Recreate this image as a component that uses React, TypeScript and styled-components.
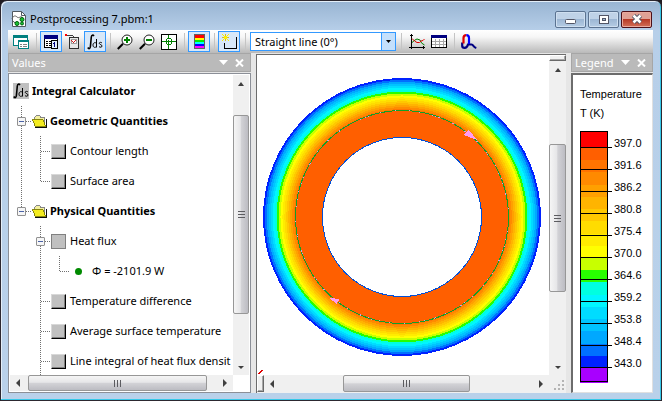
import React from 'react';
import styled, { createGlobalStyle, css } from 'styled-components';

const Global = createGlobalStyle`
  * { box-sizing: border-box; }
  html, body { margin: 0; background: #201c22; }
  button, select { font: inherit; color: inherit; }
  button { padding: 0; margin: 0; border: 0; background: none; }
  svg { display: block; flex: none; }
  ul { list-style: none; margin: 0; padding: 0; }
`;

const Frame = styled.div`
  display: flex;
  flex-direction: column;
  height: 100vh;
  padding: 0 8px 7px 7px;
  border: 1px solid #2c2830;
  border-radius: 7px 7px 0 0;
  background: linear-gradient(#98b4d2, #b7cfe9 30px, #b9d1ea);
  box-shadow: inset -1px -1px #36c8e8, inset 1px 1px #e4eef8;
  font: 11px/16px 'Noto Sans', 'Open Sans', sans-serif;
  color: #000;
`;

const TitleBar = styled.header`
  display: flex;
  align-items: center;
  height: 29px;
  flex: none;
  padding-left: 3px;
  padding-top: 7px;
  gap: 3px;
`;

const Title = styled.h1`
  margin: 0;
  flex: 1;
  font-size: 11px;
  font-weight: 400;
  line-height: 16px;
`;

const WindowButtons = styled.div`
  display: flex;
  gap: 2px;
  padding-right: 1px;
`;

const WindowButton = styled.button<{ $close?: boolean }>`
  display: grid;
  place-items: center;
  width: 31px;
  height: 17px;
  border: 1px solid ${p => (p.$close ? '#4c1018' : '#5b7391')};
  border-radius: 2px;
  box-shadow: inset 0 0 0 1px ${p => (p.$close ? '#e9a99d' : '#cfdff0')};
  background: ${p => (p.$close
    ? 'linear-gradient(#e0a195 0 45%, #b83a26 50%, #d27058)'
    : 'linear-gradient(#bfd2e7 0 45%, #9db7d4 50%, #b5cce4)')};
`;

const Toolbar = styled.div`
  display: flex;
  align-items: center;
  flex: none;
  height: 23px;
  padding-left: 2px;
  background: linear-gradient(#fff, #f6f6f6 30%, #b9b9b9);
`;

const ToolButton = styled.button<{ $on?: boolean }>`
  display: grid;
  place-items: center;
  width: 22px;
  height: 21px;
  flex: none;
  ${p => p.$on && css`border: 1px solid #3399ff; background: #d8e8f8;`}
`;

const Separator = styled.span<{ $wide?: boolean }>`
  width: ${p => (p.$wide ? 10 : 8)}px;
  height: 17px;
  flex: none;
  background: linear-gradient(#c4c4c4, #c4c4c4) center / 1px 100% no-repeat;
`;

const Combo = styled.div`
  display: grid;
  grid-template-columns: 1fr 14px;
  width: 146px;
  height: 19px;
  border: 1px solid #3399ff;
  background: #fff;
`;

const ComboSelect = styled.select`
  grid-area: 1 / 1 / 2 / 3;
  appearance: none;
  border: 0;
  padding: 0 0 0 4px;
  background: none;
  line-height: 16px;
`;

const ComboArrow = styled.span`
  grid-area: 1 / 2;
  display: grid;
  place-items: center;
  border-left: 1px solid #3399ff;
  background: #c4e0fc;
  pointer-events: none;
`;

const Workspace = styled.main`
  display: grid;
  grid-template-columns: 243px minmax(0, 1fr) 82px;
  gap: 5px;
  flex: 1;
  min-height: 0;
  background: #e6e6e6;
`;

const Panel = styled.section`
  display: flex;
  flex-direction: column;
  min-width: 0;
  min-height: 0;
`;

const PanelHeader = styled.div`
  display: flex;
  align-items: center;
  flex: none;
  height: 19px;
  padding: 0 3px;
  border: 1px solid #a6a6a6;
  background: #bababa;
  color: #fff;
  gap: 1px;
`;

const PanelTitle = styled.h2`
  margin: 0;
  flex: 1;
  font-size: 11px;
  line-height: 16px;
  font-weight: 400;
`;

const HeaderButton = styled.button`
  display: grid;
  place-items: center;
  width: 15px;
  height: 15px;
`;

const ScrollPane = styled.div`
  display: grid;
  grid-template-columns: minmax(0, 1fr) 16px;
  grid-template-rows: minmax(0, 1fr) 16px;
  flex: 1;
  min-height: 0;
  margin-top: 1px;
  border: 1px solid #8b8f97;
  padding: 1px;
  background: #fff;
`;

const ViewPane = styled(ScrollPane)`
  border-width: 1px 0 0 1px;
  border-color: #6c6c6c;
  padding: 0 0 1px;
  background: #f0f0f0;
  grid-template-columns: minmax(0, 1fr) 17px;
  grid-template-rows: minmax(0, 1fr) 17px;
`;

const Stage = styled.svg`
  width: 100%;
  height: 100%;
  background: #fff;
`;

const LegendBox = styled.div`
  flex: 1;
  margin-top: 1px;
  border: solid #6c6c6c;
  border-width: 2px 1px 1px 2px;
  border-right-color: #e0e0e0;
  border-bottom-color: #e0e0e0;
  padding: 10px 0 0 7px;
  background: #fff;
  font: 11px/19px 'Liberation Sans', Arial, sans-serif;
`;

const LegendText = styled.div`
  height: 19px;
  white-space: nowrap;
`;

const ScaleArea = styled.div`
  padding-top: 8px;
`;

const Tree = styled.ul`
  overflow: hidden;
  padding-top: 1px;
`;

const TreeRow = styled.li<{ $bold?: boolean }>`
  display: flex;
  align-items: center;
  height: 30px;
  padding-left: 2px;
  white-space: nowrap;
  font-weight: ${p => (p.$bold ? 700 : 400)};
`;

const GuideCell = styled.span`
  display: grid;
  flex: none;
  width: 19px;
  height: 30px;
  > * { grid-area: 1 / 1; }
`;

const Expander = styled.button`
  place-self: center;
  width: 9px;
  height: 9px;
  border: 1px solid #919191;
  border-radius: 1px;
  background: linear-gradient(#4b63a7, #4b63a7) center / 5px 1px no-repeat, #f6f6f6;
`;

const Item = styled.button<{ $tight?: boolean }>`
  display: flex;
  align-items: center;
  gap: ${p => (p.$tight ? 3 : 4)}px;
  padding-left: 1px;
  font-weight: inherit;
`;

const Swatch = styled.span<{ $flat?: boolean }>`
  width: 15px;
  height: 15px;
  flex: none;
  background: #c0c0c0;
  border: 1px solid #808080;
  ${p => !p.$flat && css`
    border-color: #d8d8d8 #000 #000 #d8d8d8;
    box-shadow: inset -1px -1px #808080;
  `}
`;

const Dot = styled.span`
  width: 7px;
  height: 7px;
  margin: 0 6px 0 5px;
  border-radius: 50%;
  background: #008a00;
`;

const Bar = styled.div<{ $vertical?: boolean }>`
  display: flex;
  flex-direction: ${p => (p.$vertical ? 'column' : 'row')};
  flex: 1;
  min-width: 0;
  min-height: 0;
  background: #f0f0f0;
`;

const BarSlot = styled.div<{ $vertical?: boolean }>`
  display: flex;
  flex-direction: ${p => (p.$vertical ? 'column' : 'row')};
  min-width: 0;
  min-height: 0;
`;

const ArrowButton = styled.button`
  display: grid;
  place-items: center;
  flex: 0 0 17px;
`;

const Space = styled.span<{ $grow: number }>`
  flex: ${p => p.$grow} 1 0;
`;

const Thumb = styled.button<{ $grow: number; $vertical?: boolean }>`
  display: grid;
  place-items: center;
  flex: ${p => p.$grow} 1 0;
  border: 1px solid #979797;
  border-radius: 2px;
  background: linear-gradient(${p => (p.$vertical ? '90deg' : '180deg')}, #f5f5f5, #e6e6e8 45%, #d2d2d6 52%, #bcbcc2);
`;

const SplitHandle = styled.span<{ $vertical?: boolean }>`
  flex: 0 0 ${p => (p.$vertical ? 6 : 7)}px;
  border: 1px solid #fff;
  border-right-color: #696969;
  border-bottom-color: #696969;
  box-shadow: inset -1px -1px #a8a8a8;
  background: #f0f0f0;
`;

const SizeGrip = styled.div`
  display: grid;
  place-items: end;
  padding: 2px;
`;

type ScrollProps = { vertical?: boolean; before: number; thumb: number; after: number; name: string };

function ScrollBar({ vertical, before, thumb, after, name }: ScrollProps) {
  const first = vertical ? 'M3 6 6 2 9 6z' : 'M7 2 3 6 7 10z';
  const last = vertical ? 'M3 3h6L6 6z' : 'M4 2 8 6 4 10z';
  return (
    <Bar $vertical={vertical}>
      <ArrowButton aria-label={`${name} back`}>
        <svg width="12" height={vertical ? 8 : 12}><path d={first} fill="#404040" /></svg>
      </ArrowButton>
      <Space $grow={before} />
      <Thumb $grow={thumb} $vertical={vertical} aria-label={`${name} thumb`}>
        <svg width="9" height="9" stroke="#5c5c60" shapeRendering="crispEdges">
          <path d={vertical ? 'M1 1.5h7M1 4.5h7M1 7.5h7' : 'M1.5 1v7M4.5 1v7M7.5 1v7'} />
        </svg>
      </Thumb>
      <Space $grow={after} />
      <ArrowButton aria-label={`${name} forward`}>
        <svg width="12" height={vertical ? 8 : 12}><path d={last} fill="#404040" /></svg>
      </ArrowButton>
    </Bar>
  );
}

/* Toolbar drawings, 16 by 16 */
const icon = { width: 16, height: 16, viewBox: '0 0 16 16', fill: 'none', shapeRendering: 'crispEdges' as const };

const WindowsIcon = () => (
  <svg {...icon}>
    <path fill="#fff" stroke="#008080" d="M.5 1.5h14v10H.5z" /><path fill="#008080" d="M0 1h15v3H0z" />
    <path fill="#fff" stroke="#008080" d="M5.5 6.5h10v8h-10z" /><path stroke="#008080" d="M5 7.5h11" />
    <path stroke="#808080" d="M7 10.5h2M10 10.5h4M10 12.5h4M7 12.5h2" />
  </svg>
);
const SheetIcon = () => (
  <svg {...icon}>
    <path fill="#fff" stroke="#000" d="M1.5 2.5h13v11h-13z" /><path fill="#000080" d="M1 1h14v4H1z" />
    <path stroke="#000" d="M3 7.5h2M6 7.5h2M3 9.5h2M6 9.5h2M3 11.5h2M6 11.5h2" />
    <path fill="#e0f0ff" stroke="#000" d="M8.5 6.5h6v8h-6z" /><path stroke="#000080" d="M11.5 8v5M10 9.5h2" />
  </svg>
);
const ProbeIcon = () => (
  <svg {...icon}>
    <path fill="#f00" d="M0 0h2v2H0z" />
    <path stroke="#404040" d="M2 1.500h6M8.500 2v2" />
    <path fill="#e8e8e8" stroke="#303030" d="M4.500 3.500h9v11h-9z" />
    <path fill="#fff" stroke="#a0a0a0" d="M6.500 5.500h5v4h-5z" />
    <path fill="#d02020" d="M6 6h1v1H6zM7 7h1v1H7zM8 8h1v1H8zM9 7h1v1H9zM10 6h1v1h-1z" />
  </svg>
);
const IntegralIcon = ({ gray }: { gray?: boolean }) => (
  <svg width="16" height="16" viewBox="0 0 16 16" fill="none">
    {gray && <path fill="#c0c0c0" d="M0 0h16v16H0z" />}
    <path stroke="#000" strokeWidth="1.6" d="M.8 13.500c1 1.800 2.400 1.200 2.600-1L4.300 3C4.600.8 6 .6 7 2" />
    <path stroke="#000" d="M9.500 5v8.500M9.500 9.500C8.500 8 6 8.500 6 11s2 3 3.500 1.500M15 9c-1-1-3-.8-2.700.5.3 1.200 2.700 1 2.700 2.500s-2 1.500-3 .6" />
  </svg>
);
const LensIcon = ({ plus }: { plus?: boolean }) => (
  <svg width="16" height="16" viewBox="0 0 16 16" fill="none">
    <path stroke="#000" strokeWidth="2" d="M.8 15 6 9.800" />
    <circle cx="10" cy="6" r="5" fill="#fff" stroke="#202020" />
    <path stroke="#008000" strokeWidth="2" d={plus ? 'M7 6h6M10 3v6' : 'M7 6h6'} />
  </svg>
);
const FitIcon = () => (
  <svg {...icon}>
    <path fill="#fff" stroke="#000" d="M.5.5h15v15H.5z" />
    <path stroke="#008000" d="M1 7.500h4M6 7.500h4M11 7.500h4M7.500 1v4M7.500 6v4M7.500 11v4M5.500 5v5M10.500 5v5M6 4.500h4M6 10.500h4" />
  </svg>
);
const BandsIcon = () => (
  <svg {...icon}>
    <path fill="#606060" d="M3 0h11v15H3z" />
    <path fill="#ff0000" d="M4 1h9v3H4z" /><path fill="#ffff00" d="M4 4h9v2H4z" />
    <path fill="#00f000" d="M4 6h9v2H4z" /><path fill="#00ffff" d="M4 8h9v2H4z" />
    <path fill="#0000ff" d="M4 10h9v2H4z" /><path fill="#ff00ff" d="M4 12h9v2H4z" />
  </svg>
);
const NewContourIcon = () => (
  <svg {...icon}>
    <path stroke="#000" d="M3.500 9v5.500h12V3" />
    <path stroke="#d8c020" d="M4.500 0v7M1 3.500h7" />
    <path fill="#fff000" d="M1 0h1v1H1zM2 1h1v1H2zM7 0h1v1H7zM6 1h1v1H6zM3 2h3v3H3zM2 5h1v1H2zM1 6h1v1H1zM6 5h1v1H6zM7 6h1v1H7z" />
  </svg>
);
const PlotIcon = () => (
  <svg {...icon} shapeRendering="auto">
    <path stroke="#000" shapeRendering="crispEdges" d="M2.500 0v15M0 13.500h16M1 1.500h3M14.500 12v3" />
    <path stroke="#008000" d="M3 8.500 6 6l2-1 3 1 1.500 3 3 2" />
    <path stroke="#e00000" d="M3 4.500 5.500 7 8 8.500h2.500L12 7l2-.5L15.500 5" />
  </svg>
);
const TableIcon = () => (
  <svg {...icon}>
    <path fill="#fff" stroke="#000" d="M.5 1.500h15v12H.5z" /><path fill="#000080" d="M0 1h16v3H0z" />
    <path stroke="#a8a8a8" d="M1 7.500h14M1 10.500h14M4.500 5v8M8.500 5v8M12.500 5v8" />
  </svg>
);
const LoopIcon = () => (
  <svg width="16" height="16" viewBox="0 0 16 16" fill="none" strokeWidth="2.200">
    <path stroke="#000080" d="M1.200 8.500V12q0 1.800 2.500 1.800T7 10.500h3.500q1 0 2 1.500t2.800 2" />
    <path stroke="#e00000" d="M2.500 9.500V4q0-2.800 2.800-2.800" />
    <path stroke="#0000ff" d="M5.300 1.200Q8 1.200 8 4v6" />
  </svg>
);
const FolderIcon = () => (
  <svg width="15" height="15" viewBox="0 0 16 15" shapeRendering="crispEdges">
    <path fill="#f4f0a0" stroke="#808080" d="M2.500 12V3.500l2-2h4l1 2h4V12z" />
    <path fill="#f4ec20" stroke="#808000" d="M.5 5.500h11l3 7h-11z" />
    <path fill="none" stroke="#000" d="M3 13.500h12.500V5" />
  </svg>
);
const DocumentIcon = () => (
  <svg width="16" height="16" viewBox="0 0 16 16" fill="none">
    <path fill="#fff" stroke="#505860" d="M1.500.5h9l4 4v11h-13z" />
    <path stroke="#505860" d="M10.500.5v4h4" />
    <path stroke="#606060" d="M1 8c1-3 3-4 5-2s4-2 6 1M2 10c1 2 3 2 4 1" />
    <circle cx="11" cy="8.500" r="2" fill="#18c030" stroke="#006010" />
    <circle cx="6" cy="12.500" r="2" fill="#18c030" stroke="#006010" />
    <circle cx="11" cy="12.500" r="1.500" fill="#18c030" stroke="#006010" />
  </svg>
);

/* Colour scale from hot to cold, shared by the field picture and the legend */
const SCALE = ['#ff5f00', '#ff7400', '#ff8a00', '#ffa000', '#ffb400', '#ffc800', '#ffdc00', '#ffec00', '#ffff00',
  '#c8ff00', '#28ff00', '#00ffe0', '#00f6ff', '#00dcff', '#00c4ff', '#00a8ff', '#0070ff', '#0022ff'];
const TICKS = ['397.0', '391.6', '386.2', '380.8', '375.4', '370.0', '364.6', '359.2', '353.8', '348.4', '343.0'];

function FieldPicture() {
  const step = 33 / 17;
  return (
    <Stage viewBox="0 0 291 320" role="img" aria-label="Temperature field" shapeRendering="crispEdges">
      {SCALE.slice().reverse().map((c, i) => (
        <circle key={c} cx="144.500" cy="162" r={139 - i * step} fill={c} />
      ))}
      <circle cx="144.500" cy="162" r="106.500" fill="#ff5f00" stroke="#c8a0f0" />
      <circle cx="144.500" cy="162" r="106.500" fill="none" stroke="#10a028" strokeDasharray="14 1" />
      <circle cx="144.500" cy="162" r="79.500" fill="#fff" stroke="#0050d8" />
      <path fill="#ff9cf0" d="M206 80l5-5 9 10zM72 243l10 1-3 5z" />
      <path stroke="#e00000" d="M1 319l4-4" />
    </Stage>
  );
}

function Scale() {
  const h = 220 / 18;
  return (
    <svg width="70" height="253" viewBox="0 0 70 253" fontSize="11" fontFamily="'Liberation Sans', Arial, sans-serif">
      <g shapeRendering="crispEdges">
        <path fill="#ff0000" d="M0 0h28v17H0z" />
        {SCALE.map((c, i) => <rect key={c} x="0" y={17 + i * h} width="28" height={h} fill={c} />)}
        <path fill="#a800ff" d="M0 237h28v15H0z" />
        {TICKS.map((t, i) => <path key={t} stroke="#000" d={`M0 ${16.5 + i * 22}h32`} />)}
        <path fill="none" stroke="#000" d="M.5.5h27v250H.5z" />
      </g>
      {TICKS.map((t, i) => <text key={t} x="34" y={16 + i * 22}>{t}</text>)}
    </svg>
  );
}

type Line = 'none' | 'pass' | 'tee' | 'end';
type Node = { text: string; kind: 'root' | 'folder' | 'item' | 'open' | 'value'; guides: Line[] };

const NODES: Node[] = [
  { text: 'Integral Calculator', kind: 'root', guides: [] },
  { text: 'Geometric Quantities', kind: 'folder', guides: ['tee'] },
  { text: 'Contour length', kind: 'item', guides: ['pass', 'tee'] },
  { text: 'Surface area', kind: 'item', guides: ['pass', 'end'] },
  { text: 'Physical Quantities', kind: 'folder', guides: ['end'] },
  { text: 'Heat flux', kind: 'open', guides: ['none', 'tee'] },
  { text: 'Φ = -2101.9 W', kind: 'value', guides: ['none', 'pass', 'end'] },
  { text: 'Temperature difference', kind: 'item', guides: ['none', 'tee'] },
  { text: 'Average surface temperature', kind: 'item', guides: ['none', 'tee'] },
  { text: 'Line integral of heat flux densit', kind: 'item', guides: ['none', 'tee'] },
];

const PATHS: Record<Line, string> = {
  none: '',
  pass: 'M9.5 0v30',
  tee: 'M9.5 0v30M10 15.500h10',
  end: 'M9.5 0v16M10 15.500h10',
};

function TreeNode({ text, kind, guides }: Node) {
  const expandable = kind === 'folder' || kind === 'open';
  const heading = kind === 'root' || kind === 'folder';
  return (
    <TreeRow $bold={heading} role="treeitem">
      {guides.map((g, i) => (
        <GuideCell key={i}>
          <svg width="19" height="30" stroke="#707070" strokeDasharray="1 1" shapeRendering="crispEdges">
            <path d={PATHS[g]} />
          </svg>
          {expandable && i === guides.length - 1 && <Expander aria-label={`Collapse ${text}`} />}
        </GuideCell>
      ))}
      <Item $tight={heading}>
        {kind === 'root' && <IntegralIcon gray />}
        {kind === 'folder' && <FolderIcon />}
        {kind === 'item' && <Swatch />}
        {kind === 'open' && <Swatch $flat />}
        {kind === 'value' && <Dot />}
        {text}
      </Item>
    </TreeRow>
  );
}

function Header({ title }: { title: string }) {
  return (
    <PanelHeader>
      <PanelTitle>{title}</PanelTitle>
      <HeaderButton aria-label={`${title} menu`}>
        <svg width="9" height="5"><path fill="#fff" d="M0 0h9L4.500 5z" /></svg>
      </HeaderButton>
      <HeaderButton aria-label={`Close ${title}`}>
        <svg width="9" height="8" stroke="#fff" strokeWidth="2"><path d="M1 .5l7 7M8 .5l-7 7" /></svg>
      </HeaderButton>
    </PanelHeader>
  );
}

export default function App() {
  return (
    <Frame>
      <Global />
      <TitleBar>
        <DocumentIcon />
        <Title>Postprocessing 7.pbm:1</Title>
        <WindowButtons>
          <WindowButton aria-label="Minimize">
            <svg width="12" height="10"><rect x=".5" y="5.500" width="10" height="4" rx="1" fill="#fff" stroke="#535666" /></svg>
          </WindowButton>
          <WindowButton aria-label="Maximize">
            <svg width="10" height="9" shapeRendering="crispEdges">
              <path fill="#fff" stroke="#535666" d="M.5.500h9v8h-9z" /><path fill="#9db7d4" stroke="#535666" d="M3.500 3.500h3v2h-3z" />
            </svg>
          </WindowButton>
          <WindowButton $close aria-label="Close">
            <svg width="12" height="10" fill="none">
              <path stroke="#535666" strokeWidth="4.500" d="M2.500 1.500l7 7M9.500 1.500l-7 7" />
              <path stroke="#fff" strokeWidth="2.500" d="M2.500 1.500l7 7M9.500 1.500l-7 7" />
            </svg>
          </WindowButton>
        </WindowButtons>
      </TitleBar>
      <Toolbar role="toolbar">
        <ToolButton aria-label="Windows"><WindowsIcon /></ToolButton>
        <Separator />
        <ToolButton $on aria-label="Values"><SheetIcon /></ToolButton>
        <ToolButton aria-label="Local values"><ProbeIcon /></ToolButton>
        <ToolButton $on aria-label="Integral values"><IntegralIcon /></ToolButton>
        <Separator />
        <ToolButton aria-label="Zoom in"><LensIcon plus /></ToolButton>
        <ToolButton aria-label="Zoom out"><LensIcon /></ToolButton>
        <ToolButton aria-label="Zoom to fit"><FitIcon /></ToolButton>
        <Separator />
        <ToolButton $on aria-label="Legend"><BandsIcon /></ToolButton>
        <Separator />
        <ToolButton $on aria-label="New contour"><NewContourIcon /></ToolButton>
        <Separator $wide />
        <Combo>
          <ComboSelect aria-label="Contour line type"><option>Straight line (0°)</option></ComboSelect>
          <ComboArrow><svg width="5" height="3"><path d="M0 0h5L2.500 3z" /></svg></ComboArrow>
        </Combo>
        <Separator $wide />
        <ToolButton aria-label="Plot"><PlotIcon /></ToolButton>
        <ToolButton aria-label="Table"><TableIcon /></ToolButton>
        <Separator />
        <ToolButton aria-label="Contour"><LoopIcon /></ToolButton>
      </Toolbar>
      <Workspace>
        <Panel>
          <Header title="Values" />
          <ScrollPane>
            <Tree role="tree">{NODES.map(n => <TreeNode key={n.text} {...n} />)}</Tree>
            <BarSlot $vertical><ScrollBar vertical name="Values vertical" before={23} thumb={197} after={44} /></BarSlot>
            <BarSlot><ScrollBar name="Values horizontal" before={1} thumb={178} after={9} /></BarSlot>
          </ScrollPane>
        </Panel>
        <Panel>
          <ViewPane>
            <FieldPicture />
            <BarSlot $vertical>
              <SplitHandle $vertical />
              <ScrollBar vertical name="View vertical" before={66} thumb={146} after={66} />
            </BarSlot>
            <BarSlot>
              <SplitHandle />
              <ScrollBar name="View horizontal" before={62} thumb={126} after={62} />
            </BarSlot>
            <SizeGrip>
              <svg width="10" height="10" fill="#b4b4b4"><path d="M8 0h2v2H8zM8 4h2v2H8zM4 4h2v2H4zM8 8h2v2H8zM4 8h2v2H4zM0 8h2v2H0z" /></svg>
            </SizeGrip>
          </ViewPane>
        </Panel>
        <Panel>
          <Header title="Legend" />
          <LegendBox>
            <LegendText>Temperature</LegendText>
            <LegendText>T (K)</LegendText>
            <ScaleArea><Scale /></ScaleArea>
          </LegendBox>
        </Panel>
      </Workspace>
    </Frame>
  );
}
